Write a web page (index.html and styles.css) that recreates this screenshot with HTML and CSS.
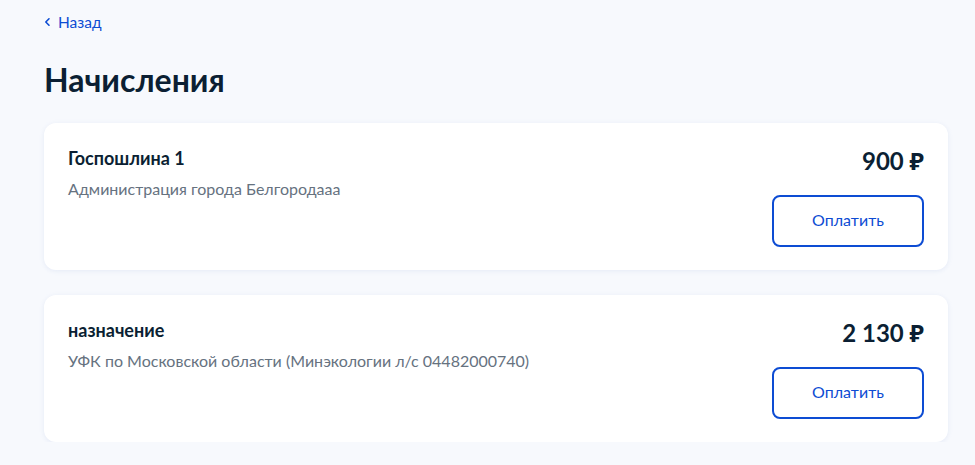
FILE: index.html
```html
<!DOCTYPE html>
<html lang="ru">
<head>
<meta charset="utf-8">
<link rel="stylesheet" href="styles.css">
</head>
<body>
<div class="page">
  <a class="back" href="#">
    <svg class="back-icon" width="8" height="10" viewBox="0 0 8 10"><path d="M5 1.8 L1.8 5 L5 8.2" fill="none" stroke="#0d4cd3" stroke-width="1.6" stroke-linecap="round" stroke-linejoin="round"/></svg>
    <span>Назад</span>
  </a>
  <h1 class="title">Начисления</h1>
  <div class="list">
    <div class="card">
      <div class="info">
        <div class="name">Госпошлина 1</div>
        <div class="org">Администрация города Белгородааа</div>
      </div>
      <div class="side">
        <div class="price">900 ₽</div>
        <button class="pay">Оплатить</button>
      </div>
    </div>
    <div class="card">
      <div class="info">
        <div class="name">назначение</div>
        <div class="org">УФК по Московской области (Минэкологии л/с 04482000740)</div>
      </div>
      <div class="side">
        <div class="price">2 130 ₽</div>
        <button class="pay">Оплатить</button>
      </div>
    </div>
  </div>
</div>
</body>
</html>
```
FILE: styles.css
```css
html, body {
  margin: 0;
  padding: 0;
  background: #f7f9fd;
  font-family: Lato, "Noto Sans", sans-serif;
  color: #0b1f33;
}
.page {
  padding: 12px 27px 0 44px;
}
.back {
  display: flex;
  align-items: center;
  gap: 6px;
  color: #0d4cd3;
  text-decoration: none;
  font-size: 15.5px;
  line-height: 20px;
}
.title {
  margin: 28px 0 0 0;
  font-size: 32px;
  line-height: 40px;
  font-weight: 700;
  color: #0b1f33;
}
.list {
  margin-top: 23px;
  display: flex;
  flex-direction: column;
  gap: 25px;
}
.card {
  background: #fff;
  border-radius: 12px;
  box-shadow: 0 1px 4px rgba(224, 230, 245, 0.8);
  padding: 24px 24px 23px 24px;
  display: flex;
  justify-content: space-between;
}
.name {
  font-size: 18px;
  line-height: 22px;
  font-weight: 700;
}
.org {
  margin-top: 9px;
  font-size: 16px;
  line-height: 22px;
  color: #66727f;
}
.side {
  display: flex;
  flex-direction: column;
  align-items: flex-end;
}
.price {
  font-size: 24px;
  line-height: 28px;
  font-weight: 700;
}
.pay {
  margin-top: 20px;
  width: 152px;
  height: 52px;
  padding: 0 0 3px 0;
  border: 2px solid #0d4cd3;
  border-radius: 8px;
  background: #fff;
  color: #0d4cd3;
  font-family: Lato, "Noto Sans", sans-serif;
  font-size: 16px;
  cursor: pointer;
}
```
